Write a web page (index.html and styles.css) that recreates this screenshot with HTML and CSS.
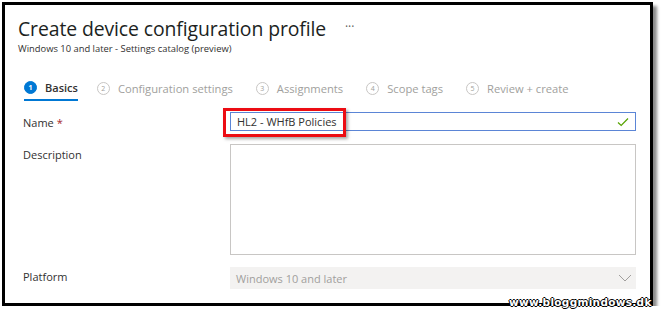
FILE: index.html
```html
<!DOCTYPE html>
<html lang="en">
<head>
    <meta charset="UTF-8">
    <title>Create device configuration profile</title>
    <link rel="stylesheet" href="styles.css">
</head>
<body>
<div class="frame">
    <header class="head">
        <h1>Create device configuration profile <span class="more">&middot;&middot;&middot;</span></h1>
        <p class="sub">Windows 10 and later - Settings catalog (preview)</p>
    </header>

    <ul class="steps">
        <li class="step active"><span class="num">1</span>Basics</li>
        <li class="step"><span class="num">2</span>Configuration settings</li>
        <li class="step"><span class="num">3</span>Assignments</li>
        <li class="step"><span class="num">4</span>Scope tags</li>
        <li class="step"><span class="num">5</span>Review + create</li>
    </ul>

    <form class="form">
        <div class="row first">
            <label>Name <span class="req">*</span></label>
            <div class="field name">
                <span class="value">HL2 - WHfB Policies</span>
                <svg class="check" width="12" height="10" viewBox="0 0 12 10"><path d="M1 5.5 L4.2 8.5 L11 1.5" fill="none" stroke="#57a300" stroke-width="1.2"/></svg>
                <span class="highlight"></span>
            </div>
        </div>
        <div class="row">
            <label>Description</label>
            <div class="field area"></div>
        </div>
        <div class="row">
            <label>Platform</label>
            <div class="field select">
                <span class="value">Windows 10 and later</span>
                <svg class="chev" width="14" height="8" viewBox="0 0 14 8"><path d="M1 1 L7 7 L13 1" fill="none" stroke="#a19f9d" stroke-width="1"/></svg>
            </div>
        </div>
    </form>
</div>
<div class="mark">www.bloggmindows.dk</div>
</body>
</html>
```

FILE: styles.css
```css
/* General */
body {
    margin: 0;
    background: #fff;
    font-family: "Open Sans", "Noto Sans", sans-serif;
    color: #323130;
}

.frame {
    margin: 2px 0 0 2px;
    width: 645px;
    height: 298px;
    border: 3px solid #000;
    box-shadow: 4px 4px 3px rgba(0, 0, 0, 0.45);
    padding: 0;
    overflow: hidden;
    position: relative;
}

/* Header */
.head {
    padding: 9px 0 0 13px;
}

.head h1 {
    margin: 0;
    font-size: 19.4px;
    font-weight: 400;
    line-height: 26px;
    color: #201f1e;
    letter-spacing: -0.1px;
}

.more {
    font-size: 12px;
    color: #605e5c;
    margin-left: 14px;
    vertical-align: 5px;
}

.sub {
    margin: 0;
    font-size: 9.4px;
    line-height: 14px;
    color: #323130;
}

/* Steps */
.steps {
    list-style: none;
    margin: 19px 0 0 19px;
    padding: 0;
    display: flex;
    gap: 23px;
}

.step {
    display: flex;
    align-items: center;
    font-size: 11.2px;
    color: #a19f9d;
    height: 26px;
}

.num {
    width: 11px;
    height: 11px;
    border: 1px solid #c8c6c4;
    border-radius: 50%;
    font-size: 7px;
    display: inline-flex;
    align-items: center;
    justify-content: center;
    margin-right: 8px;
    color: #a19f9d;
}

.step.active {
    color: #323130;
    font-size: 11px;
    font-weight: 600;
    border-bottom: 2px solid #0078d4;
    height: 24px;
    margin-right: -4px;
}

.step.active .num {
    background: #0078d4;
    border-color: #0078d4;
    color: #fff;
    font-weight: 700;
}

/* Form */
.form {
    margin-top: 11px;
    padding-left: 18px;
    padding-right: 14px;
}

.row {
    display: flex;
    margin-bottom: 11px;
}

.row.first {
    margin-bottom: 13px;
}

.row label {
    width: 207px;
    font-size: 11px;
    color: #323130;
    padding-top: 3px;
}

.req {
    color: #a4262c;
}

.field {
    flex: 1;
    position: relative;
    box-sizing: border-box;
    display: flex;
    align-items: center;
    font-size: 11px;
}

.field.name {
    height: 19px;
    border: 1px solid #5b85d6;
    padding: 0 6px;
    justify-content: space-between;
}

.field.area {
    height: 111px;
    border: 1px solid #c8c6c4;
}

.field.select {
    height: 22px;
    background: #f3f2f1;
    color: #a19f9d;
    padding: 0 4px 0 6px;
    justify-content: space-between;
    margin-top: 1px;
}

.highlight {
    position: absolute;
    left: -8px;
    top: -5px;
    width: 117px;
    height: 23px;
    border: 3px solid #ec0c13;
    box-shadow: 2px 2px 3px rgba(0, 0, 0, 0.35);
}

/* Watermark */
.mark {
    position: absolute;
    left: 509px;
    top: 296px;
    font-family: "DejaVu Sans", sans-serif;
    font-weight: 700;
    font-size: 10.5px;
    line-height: 13px;
    color: #fff;
    letter-spacing: 0.3px;
    text-shadow: 1px 0 0 #000, -1px 0 0 #000, 0 1px 0 #000, 0 -1px 0 #000;
}
```
